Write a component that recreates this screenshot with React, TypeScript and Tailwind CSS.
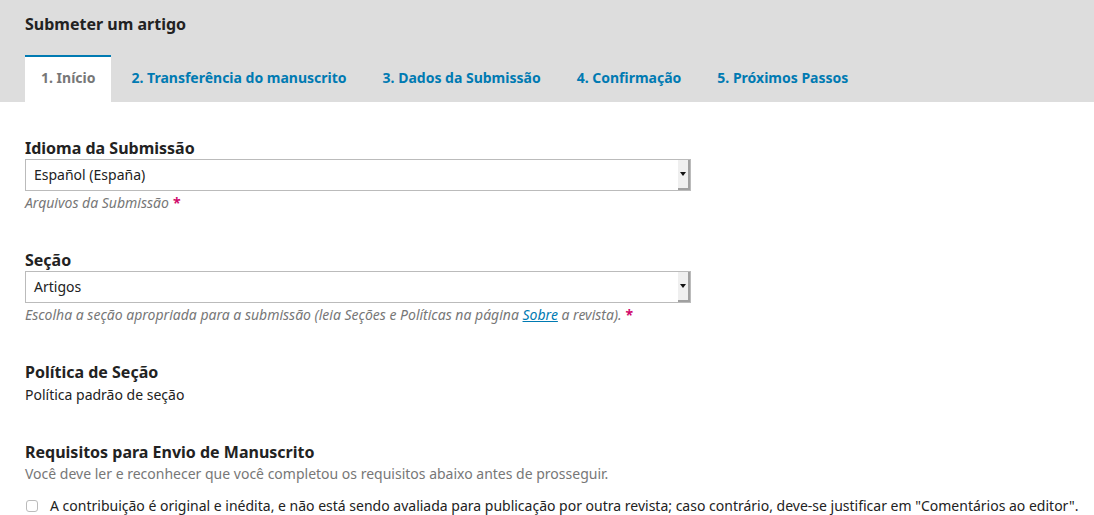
import { FC } from 'react';

const tabs = ['1. Início', '2. Transferência do manuscrito', '3. Dados da Submissão', '4. Confirmação', '5. Próximos Passos'];

const FakeSelect: FC<{ value: string }> = ({ value }) => (
  <div className="flex h-[32px] w-[666px] items-stretch border border-[#bbb] bg-white">
    <span className="flex-1 self-center pl-[8px] text-[14px] leading-[20px] text-[#222]">{value}</span>
    <span className="flex w-[12px] items-center justify-center border-r-2 border-b-2 border-[#a0a0a0] bg-[#efefef]">
      <svg width="6" height="4" viewBox="0 0 6 4">
        <path d="M0 0h6L3 4z" fill="#111" />
      </svg>
    </span>
  </div>
);

const Required = () => <span className="ml-[4px] not-italic font-bold text-[#d00a6c]">*</span>;

export default function App() {
  return (
    <div className="min-h-screen bg-white font-['Noto_Sans',sans-serif] text-[#222]">
      <header className="bg-[#ddd] px-[25px] pt-[14px]">
        <h1 className="text-[16px] font-bold leading-[20px]">Submeter um artigo</h1>
        <nav className="mt-[21px] flex gap-[4px]">
          {tabs.map((tab, i) => (
            <div
              key={tab}
              className={
                i === 0
                  ? 'border-t-2 border-[#007ab2] bg-white px-[16px] pt-[11px] pb-[14px] text-[14px] font-bold leading-[20px] text-[#777]'
                  : 'border-t-2 border-transparent px-[16px] pt-[11px] pb-[14px] text-[14px] font-bold leading-[20px] text-[#007ab2]'
              }
            >
              {tab}
            </div>
          ))}
        </nav>
      </header>

      <main className="pl-[25px] pt-[36px]">
        <section>
          <h2 className="text-[16px] font-bold leading-[20px]">Idioma da Submissão</h2>
          <div className="mt-[1px]">
            <FakeSelect value="Español (España)" />
          </div>
          <p className="mt-[3px] text-[14px] italic leading-[18px] text-[#777]">
            Arquivos da Submissão
            <Required />
          </p>
        </section>

        <section className="mt-[38px]">
          <h2 className="text-[16px] font-bold leading-[20px]">Seção</h2>
          <div className="mt-[1px]">
            <FakeSelect value="Artigos" />
          </div>
          <p className="mt-[3px] text-[14px] italic leading-[18px] text-[#777]">
            Escolha a seção apropriada para a submissão (leia Seções e Políticas na página{' '}
            <a href="#" className="text-[#007ab2] underline">
              Sobre
            </a>{' '}
            a revista).
            <Required />
          </p>
        </section>

        <section className="mt-[38px]">
          <h2 className="text-[16px] font-bold leading-[20px]">Política de Seção</h2>
          <p className="mt-[3px] text-[14px] leading-[20px]">Política padrão de seção</p>
        </section>

        <section className="mt-[37px]">
          <h2 className="text-[16px] font-bold leading-[20px]">Requisitos para Envio de Manuscrito</h2>
          <p className="mt-[3px] text-[14px] leading-[18px] text-[#777]">
            Você deve ler e reconhecer que você completou os requisitos abaixo antes de prosseguir.
          </p>
          <label className="mt-[14px] flex items-center whitespace-nowrap text-[14px] leading-[18px]">
            <span className="ml-[1px] mr-[12px] h-[12px] w-[12px] shrink-0 rounded-[3px] border border-[#bbb] bg-white" />
            A contribuição é original e inédita, e não está sendo avaliada para publicação por outra revista; caso contrário, deve-se justificar em "Comentários ao editor".
          </label>
        </section>
      </main>
    </div>
  );
}
